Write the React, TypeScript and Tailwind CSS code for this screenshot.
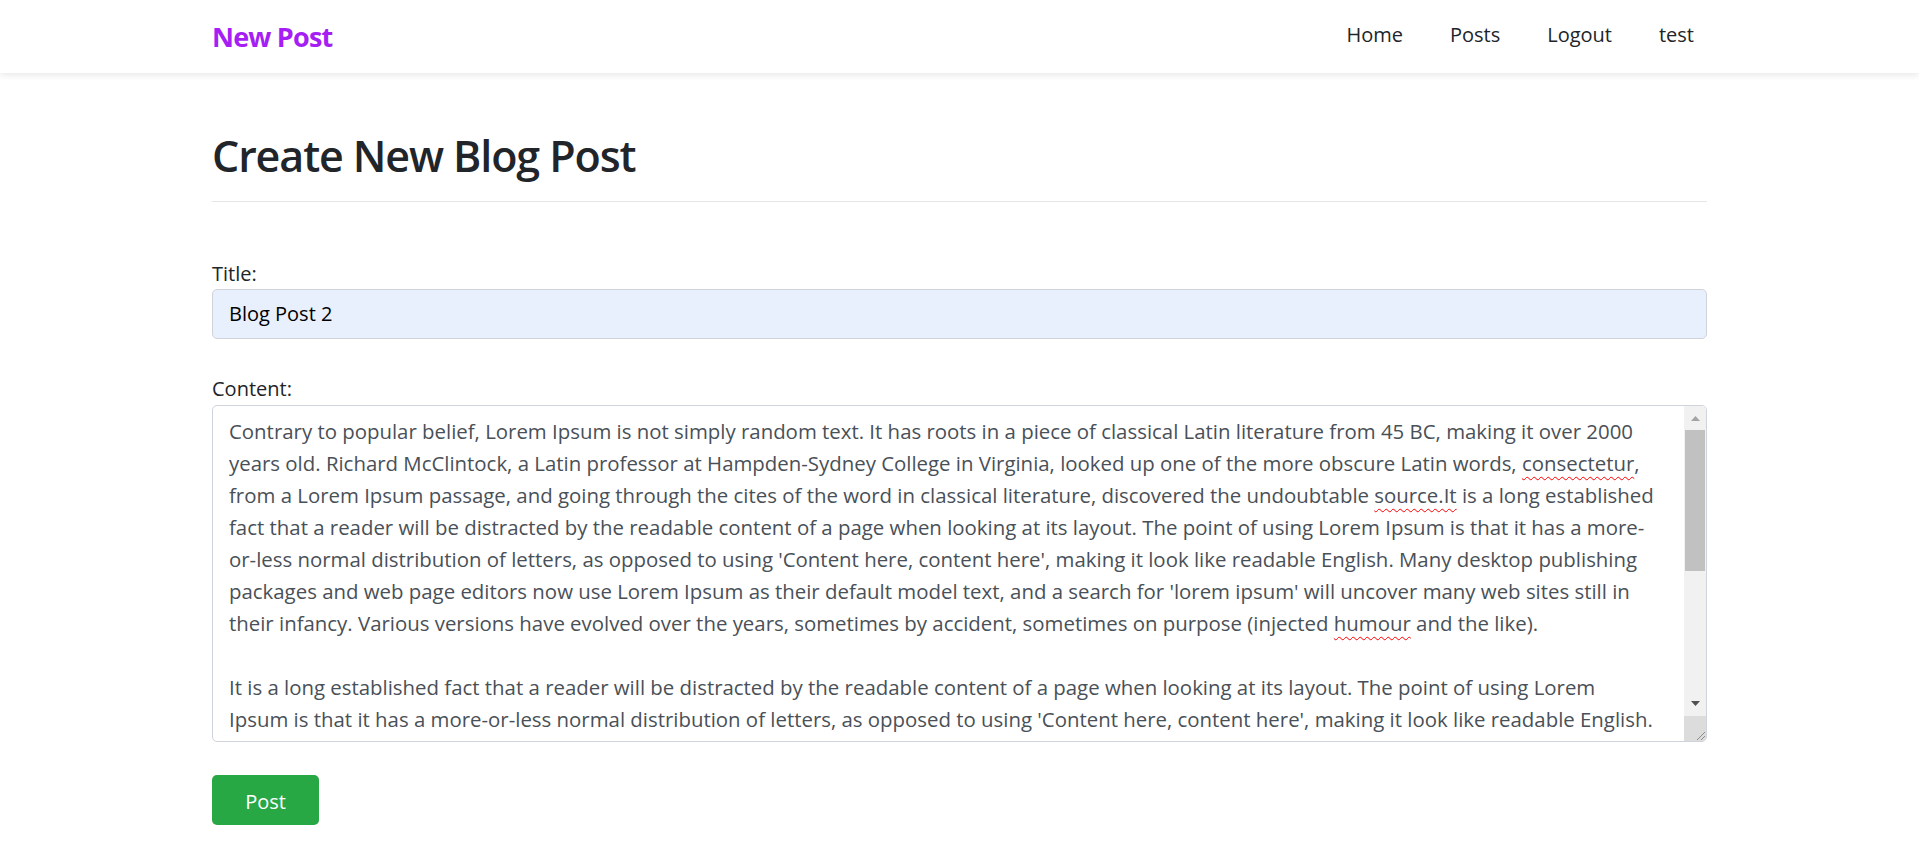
const lines = [
  "Contrary to popular belief, Lorem Ipsum is not simply random text. It has roots in a piece of classical Latin literature from 45 BC, making it over 2000",
  "years old. Richard McClintock, a Latin professor at Hampden-Sydney College in Virginia, looked up one of the more obscure Latin words, {consectetur},",
  "from a Lorem Ipsum passage, and going through the cites of the word in classical literature, discovered the undoubtable {source.It} is a long established",
  "fact that a reader will be distracted by the readable content of a page when looking at its layout. The point of using Lorem Ipsum is that it has a more-",
  "or-less normal distribution of letters, as opposed to using 'Content here, content here', making it look like readable English. Many desktop publishing",
  "packages and web page editors now use Lorem Ipsum as their default model text, and a search for 'lorem ipsum' will uncover many web sites still in",
  "their infancy. Various versions have evolved over the years, sometimes by accident, sometimes on purpose (injected {humour} and the like).",
  "",
  "It is a long established fact that a reader will be distracted by the readable content of a page when looking at its layout. The point of using Lorem",
  "Ipsum is that it has a more-or-less normal distribution of letters, as opposed to using 'Content here, content here', making it look like readable English.",
]

// words the browser's spell checker flagged
const Line = ({ text }: { text: string }) => {
  const parts = text.split(/(\{[^}]+\})/)
  return (
    <div className="h-8 whitespace-pre">
      {parts.map((p, i) =>
        p.startsWith("{") ? (
          <span key={i} className="underline decoration-wavy decoration-[#ff0000] decoration-1 underline-offset-[5px]">
            {p.slice(1, -1)}
          </span>
        ) : (
          <span key={i}>{p}</span>
        )
      )}
    </div>
  )
}

const NavBar = () => {
  return (
    <nav className="relative z-10 h-[73px] bg-white shadow-[0_3px_6px_rgba(0,0,0,0.08)]">
      <div className="mx-auto flex w-[1495px] items-start">
        <a className="mt-[18px] text-[27px] leading-[38px] font-bold tracking-[-0.8px] text-[#a51ff5]" href="#">
          New Post
        </a>
        <ul className="ml-auto mt-[20px] flex gap-[47px] pr-[13px] text-[20px] leading-[30px] text-[#212529]">
          <li><a href="#">Home</a></li>
          <li><a href="#">Posts</a></li>
          <li><a href="#">Logout</a></li>
          <li><a href="#">test</a></li>
        </ul>
      </div>
    </nav>
  )
}

const ScrollBar = () => {
  return (
    <div className="flex w-[22px] flex-col bg-[#f1f1f1]">
      <div className="flex h-[24px] items-center justify-center">
        <svg width="9" height="5" viewBox="0 0 9 5"><path d="M0 5 L4.5 0 L9 5 Z" fill="#a3a3a3" /></svg>
      </div>
      <div className="mx-px h-[141px] bg-[#c1c1c1]" />
      <div className="flex-1" />
      <div className="flex h-[25px] items-center justify-center">
        <svg width="9" height="5" viewBox="0 0 9 5"><path d="M0 0 L9 0 L4.5 5 Z" fill="#505050" /></svg>
      </div>
      <div className="flex h-[25px] items-end justify-end bg-[#dcdcdc]">
        <svg width="12" height="12" viewBox="0 0 12 12">
          <path d="M11 3 L3 11 M11 7 L7 11" stroke="#8a8a8a" strokeWidth="1" />
        </svg>
      </div>
    </div>
  )
}

export default function App() {
  return (
    <div className="min-h-[860px] bg-white font-['Open_Sans',sans-serif] text-[#212529]">
      <NavBar />
      <main className="mx-auto w-[1495px] pt-[56px]">
        <h1 className="text-[43px] leading-[53px] font-semibold tracking-[-1.1px]">Create New Blog Post</h1>
        <hr className="mt-[19px] border-t border-[#e5e5e5]" />

        <form className="flex flex-col">
          <label className="mt-[57px] text-[20px] leading-[30px]">Title:</label>
          <div className="flex h-[50px] items-center rounded-[5px] border border-[#ced4da] bg-[#e8f0fe] pl-4 text-[20px] text-black">
            Blog Post 2
          </div>

          <label className="mt-[35px] mb-px text-[20px] leading-[30px]">Content:</label>
          <div className="flex h-[337px] overflow-hidden rounded-[5px] border border-[#ced4da] bg-white">
            <div className="flex-1 overflow-hidden pt-[9px] pl-4 text-[20.4px] leading-8 text-[#495057]">
              {lines.map((l, i) => (
                <Line key={i} text={l} />
              ))}
            </div>
            <ScrollBar />
          </div>

          <div className="mt-[33px]">
            <button type="button" className="h-[50px] w-[107px] rounded-[5px] bg-[#28a745] pt-[3px] text-[20px] text-white">
              Post
            </button>
          </div>
        </form>
      </main>
    </div>
  )
}
